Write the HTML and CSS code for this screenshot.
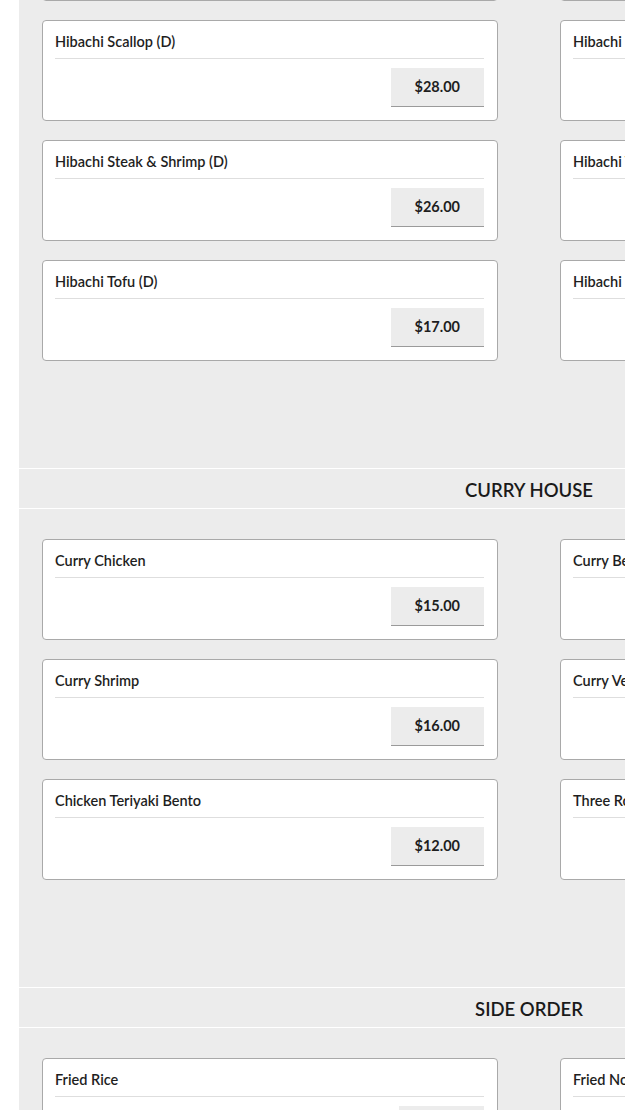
FILE: index.html
```html
<!DOCTYPE html>
<html lang="en">
<head>
<meta charset="utf-8">
<title>Menu</title>
<link rel="stylesheet" href="styles.css">
</head>
<body>
<div class="page">
  <section class="section">
    <div class="grid grid-first">
      <div class="card"><div class="name">Hibachi Salmon (D)</div><div class="foot"><span class="price">$24.00</span></div></div>
      <div class="card"><div class="name">Hibachi Filet Mignon (D)</div><div class="foot"><span class="price">$29.00</span></div></div>
      <div class="card"><div class="name">Hibachi Scallop (D)</div><div class="foot"><span class="price">$28.00</span></div></div>
      <div class="card"><div class="name">Hibachi Chicken &amp; Shrimp (D)</div><div class="foot"><span class="price">$24.00</span></div></div>
      <div class="card"><div class="name">Hibachi Steak &amp; Shrimp (D)</div><div class="foot"><span class="price">$26.00</span></div></div>
      <div class="card"><div class="name">Hibachi Vegetable (D)</div><div class="foot"><span class="price">$15.00</span></div></div>
      <div class="card"><div class="name">Hibachi Tofu (D)</div><div class="foot"><span class="price">$17.00</span></div></div>
      <div class="card"><div class="name">Hibachi Lobster (D)</div><div class="foot"><span class="price">$32.00</span></div></div>
    </div>
  </section>
  <section class="section">
    <h2 class="section-title">CURRY HOUSE</h2>
    <div class="grid">
      <div class="card"><div class="name">Curry Chicken</div><div class="foot"><span class="price">$15.00</span></div></div>
      <div class="card"><div class="name">Curry Beef</div><div class="foot"><span class="price">$16.00</span></div></div>
      <div class="card"><div class="name">Curry Shrimp</div><div class="foot"><span class="price">$16.00</span></div></div>
      <div class="card"><div class="name">Curry Vegetable</div><div class="foot"><span class="price">$14.00</span></div></div>
      <div class="card"><div class="name">Chicken Teriyaki Bento</div><div class="foot"><span class="price">$12.00</span></div></div>
      <div class="card"><div class="name">Three Roll Combo</div><div class="foot"><span class="price">$15.00</span></div></div>
    </div>
  </section>
  <section class="section">
    <h2 class="section-title">SIDE ORDER</h2>
    <div class="grid">
      <div class="card"><div class="name">Fried Rice</div><div class="foot"><span class="price">$4.00</span></div></div>
      <div class="card"><div class="name">Fried Noodle</div><div class="foot"><span class="price">$5.00</span></div></div>
    </div>
  </section>
</div>
</body>
</html>
```
FILE: styles.css
```css
html, body {
  margin: 0;
  padding: 0;
  background: #ffffff;
  overflow: hidden;
}
body {
  font-family: "Lato", "Noto Sans", sans-serif;
  color: #1e1e1e;
}
.page {
  margin-left: 19px;
  width: 1020px;
  background: #ececec;
  min-height: 1200px;
}
.section-title {
  margin: 0;
  height: 39px;
  line-height: 42px;
  border-top: 1px solid #ffffff;
  border-bottom: 1px solid #ffffff;
  text-align: center;
  font-size: 18.5px;
  font-weight: 600;
  color: #1a1a1a;
}
.grid {
  display: grid;
  grid-template-columns: 456px 456px;
  column-gap: 62px;
  row-gap: 19px;
  padding: 30px 23px 107px;
}
.grid-first {
  margin-top: -130px;
}
.card {
  box-sizing: border-box;
  height: 101px;
  background: #ffffff;
  border: 1px solid #a9a9a9;
  border-radius: 4px;
  padding: 0 13px 13px 12px;
  display: flex;
  flex-direction: column;
}
.name {
  padding: 13px 0 8px;
  line-height: 16px;
  font-size: 14.5px;
  font-weight: 600;
  color: #1e1e1e;
  border-bottom: 1px solid #dedede;
  white-space: nowrap;
}
.foot {
  margin-top: 9px;
  display: flex;
  justify-content: flex-end;
}
.price {
  box-sizing: border-box;
  height: 39px;
  line-height: 38px;
  padding: 0 24px;
  background: #ececec;
  border-bottom: 1px solid #9a9a9a;
  font-size: 14.5px;
  font-weight: 700;
  color: #1e1e1e;
}
```
